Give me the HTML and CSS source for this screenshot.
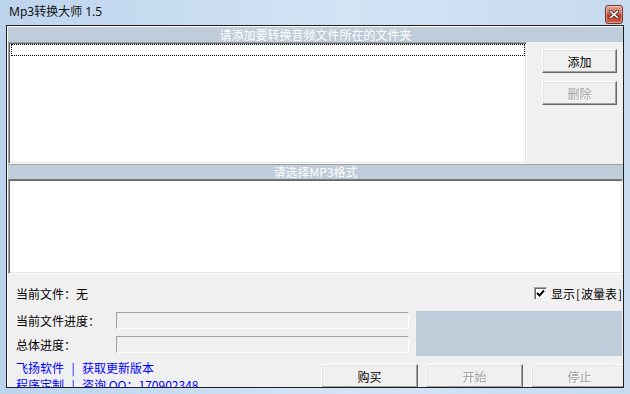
FILE: index.html
```html
<!DOCTYPE html>
<html lang="zh-CN">
<head>
    <meta charset="UTF-8" />
    <title>Mp3转换大师 1.5</title>
    <link rel="stylesheet" href="styles.css">
</head>
<body>
    <div class="window">
        <div class="titlebar">
            <span class="title">Mp3转换大师 1.5</span>
            <div class="close">
                <svg width="10" height="9" viewBox="0 0 10 9">
                    <path d="M1 1 L9 8 M9 1 L1 8" stroke="#3a2a28" stroke-width="3.2" stroke-linecap="square" />
                    <path d="M1.5 1.5 L8.5 7.5 M8.5 1.5 L1.5 7.5" stroke="#fff" stroke-width="1.6" stroke-linecap="square" />
                </svg>
            </div>
        </div>

        <div class="client">
            <div class="caption">请添加要转换音频文件所在的文件夹</div>
            <div class="files-row">
                <div class="listbox">
                    <div class="focus-row"></div>
                </div>
                <div class="side">
                    <button class="btn">添加</button>
                    <button class="btn" disabled>删除</button>
                </div>
            </div>

            <div class="format-box">
                <div class="caption caption-format">请选择MP3格式</div>
                <div class="format-list"></div>
            </div>

            <div class="status">
                <div class="status-top">
                    <span>当前文件：无</span>
                    <label class="check">
                        <span class="checkbox">
                            <svg width="9" height="9" viewBox="0 0 9 9">
                                <path d="M1 4 L3.5 6.5 L8 1.5" fill="none" stroke="#000" stroke-width="2" />
                            </svg>
                        </span>
                        <span>显示<span class="br">[</span>波量表<span class="br">]</span></span>
                    </label>
                </div>

                <div class="progress-block">
                    <div class="progress-rows">
                        <div class="progress-row">
                            <span class="progress-label">当前文件进度：</span>
                            <div class="bar"></div>
                        </div>
                        <div class="progress-row">
                            <span class="progress-label">总体进度：</span>
                            <div class="bar"></div>
                        </div>
                    </div>
                    <div class="meter"></div>
                </div>

                <div class="bottom">
                    <div class="links">
                        <div><a href="#">飞扬软件</a><span class="sep">|</span><a href="#">获取更新版本</a></div>
                        <div><a href="#">程序定制</a><span class="sep">|</span><a href="#">咨询 QQ：170902348</a></div>
                    </div>
                    <div class="actions">
                        <button class="btn btn-wide">购买</button>
                        <button class="btn btn-wide" disabled>开始</button>
                        <button class="btn btn-wide" disabled>停止</button>
                    </div>
                </div>
            </div>
        </div>
    </div>
</body>
</html>
```

FILE: styles.css
```css
:root {
    --face: #f0f0f0;
    --caption: #bfccd9;
    --shadow: #a0a0a0;
    --dark: #696969;
    --light: #e3e3e3;
}

html, body {
    margin: 0;
    padding: 0;
}

body {
    width: 630px;
    height: 394px;
    overflow: hidden;
    font-family: "Noto Sans CJK SC", "Noto Sans", sans-serif;
    font-size: 12px;
    color: #000;
    background: linear-gradient(to right, #bdd4ed, #d3e4f5 55%, #c6daf0);
}

.window {
    display: flex;
    flex-direction: column;
    height: 394px;
}

.titlebar {
    height: 25px;
    display: flex;
    align-items: flex-start;
    flex-shrink: 0;
}

.title {
    font-family: "Noto Sans", "Noto Sans CJK SC", sans-serif;
    font-size: 12px;
    line-height: 16px;
    margin: 4px 0 0 9px;
    color: #111;
}

.close {
    margin: 5px 7px 0 auto;
    width: 16px;
    height: 17px;
    border: 1px solid #6b3a30;
    border-radius: 3px;
    background: linear-gradient(to bottom, #e9a693, #d66a52 45%, #c2381c 55%, #d2604a);
    display: flex;
    align-items: center;
    justify-content: center;
    box-shadow: inset 0 0 0 1px rgba(255,255,255,0.35);
}

.client {
    height: 360px;
    margin: 0 6px;
    border: 1px solid #1f1f1f;
    background: var(--face);
    padding: 1px 0 0 1px;
    box-shadow: inset 1px 1px 0 #fff;
    overflow: hidden;
    display: flex;
    flex-direction: column;
}

.caption {
    height: 15px;
    line-height: 15px;
    background: var(--caption);
    color: #fff;
    text-align: center;
    flex-shrink: 0;
}

.files-row {
    height: 122px;
    display: flex;
    flex-shrink: 0;
}

.listbox {
    width: 519px;
    box-sizing: border-box;
    background: #fff;
    border: 1px solid;
    border-color: var(--shadow) #fff #fff var(--shadow);
    box-shadow: inset 1px 1px 0 var(--dark), inset -1px -1px 0 var(--light);
    padding: 1px 0 0 2px;
}

.focus-row {
    width: 512px;
    height: 10px;
    border: 1px dotted #000;
}

.side {
    flex: 1;
    display: flex;
    flex-direction: column;
    gap: 8px;
    padding: 7px 0 0 15px;
}

.btn {
    font-family: inherit;
    font-size: 12px;
    width: 75px;
    height: 24px;
    padding: 0;
    background: var(--face);
    color: #000;
    border: 1px solid;
    border-color: #fff var(--dark) var(--dark) #fff;
    box-shadow: inset -1px -1px 0 var(--shadow), inset 1px 1px 0 var(--light);
    border-radius: 0;
}

.btn:disabled {
    color: var(--shadow);
    text-shadow: 1px 1px 0 #fff;
}

.format-box {
    display: flex;
    flex-direction: column;
    flex-shrink: 0;
    border-top: 1px solid var(--shadow);
}

.caption-format {
    height: 14px;
    line-height: 14px;
}

.format-list {
    height: 95px;
    box-sizing: border-box;
    background: #fff;
    border: 1px solid;
    border-color: #7a7a7a #fff #fff var(--shadow);
    box-shadow: inset 1px 1px 0 var(--dark), inset -1px -1px 0 var(--light);
}

.status {
    flex: 1;
    padding: 14px 0 0 8px;
}

.status-top {
    display: flex;
    justify-content: space-between;
    align-items: center;
    height: 12px;
    line-height: 12px;
}

.check {
    display: flex;
    align-items: center;
    gap: 4px;
    margin-top: -1px;
}

.br {
    display: inline-block;
    width: 6px;
    text-align: center;
}

.checkbox {
    width: 11px;
    height: 11px;
    background: #fff;
    border: 1px solid;
    border-color: var(--shadow) #fff #fff var(--shadow);
    box-shadow: inset 1px 1px 0 var(--dark), inset -1px -1px 0 var(--light);
    display: flex;
    align-items: center;
    justify-content: center;
}

.progress-block {
    display: flex;
    margin-top: 11px;
    height: 45px;
}

.progress-rows {
    display: flex;
    flex-direction: column;
    gap: 7px;
    padding-top: 1px;
}

.progress-row {
    display: flex;
    align-items: center;
    height: 17px;
}

.progress-label {
    width: 100px;
}

.bar {
    width: 291px;
    height: 15px;
    border: 1px solid;
    border-color: var(--shadow) #fff #fff var(--shadow);
    background: var(--face);
}

.meter {
    margin-left: 7px;
    width: 206px;
    background: var(--caption);
}

.bottom {
    display: flex;
    align-items: flex-start;
}

.links {
    width: 305px;
    flex-shrink: 0;
    margin-top: 3px;
    line-height: 17px;
}

.links a {
    color: #0000ff;
    text-decoration: none;
}

.sep {
    display: inline-block;
    width: 18px;
    text-align: center;
    color: #0000ff;
}

.actions {
    display: flex;
    gap: 8px;
    margin-top: 8px;
    flex-shrink: 0;
}

.btn-wide {
    width: 97px;
    flex-shrink: 0;
}
```
